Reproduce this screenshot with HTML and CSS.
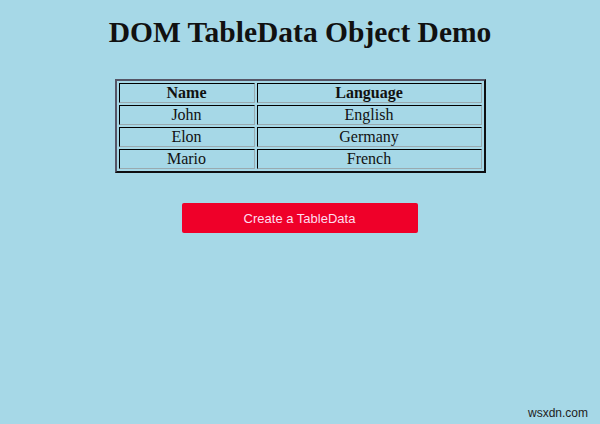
FILE: index.html
```html
<!DOCTYPE html>
<html>
<head>
<meta charset="utf-8">
<link rel="stylesheet" href="styles.css">
</head>
<body>
<h1 class="title">DOM TableData Object Demo</h1>
<table class="data">
  <tr><th class="c1">Name</th><th class="c2">Language</th></tr>
  <tr><td>John</td><td>English</td></tr>
  <tr><td>Elon</td><td>Germany</td></tr>
  <tr><td>Mario</td><td>French</td></tr>
</table>
<div class="actions">
  <button class="btn">Create a TableData</button>
</div>
<div class="mark">wsxdn.com</div>
</body>
</html>
```
FILE: styles.css
```css
html, body {
  margin: 0;
  padding: 0;
}
body {
  width: 600px;
  height: 424px;
  background: #a6d8e7;
  font-family: "Liberation Serif", "Times New Roman", serif;
  color: #111;
  position: relative;
  overflow: hidden;
}
.title {
  margin: 0;
  padding-top: 15px;
  text-align: center;
  font-size: 29.5px;
  font-weight: bold;
  line-height: 34px;
}
.data {
  margin: 30px auto 0;
  width: 371px;
  border: 2px outset #556;
  border-spacing: 2px;
  font-size: 16px;
}
.data th, .data td {
  border: 1px inset #667;
  border-color: #445 #99aab0 #99aab0 #445;
  padding: 1px;
  text-align: center;
  line-height: 16px;
}
.c1 { width: 132px; }
.actions {
  display: flex;
  justify-content: center;
  margin-top: 30px;
}
.btn {
  width: 236px;
  height: 30px;
  margin-left: -1px;
  background: #ef0029;
  border: none;
  border-radius: 2px;
  color: #fde;
  font-family: "Liberation Sans", Arial, sans-serif;
  font-size: 13px;
}
.mark {
  position: absolute;
  right: 12px;
  bottom: 4px;
  font-family: "Liberation Sans", Arial, sans-serif;
  font-size: 12px;
  color: #222;
}
```
